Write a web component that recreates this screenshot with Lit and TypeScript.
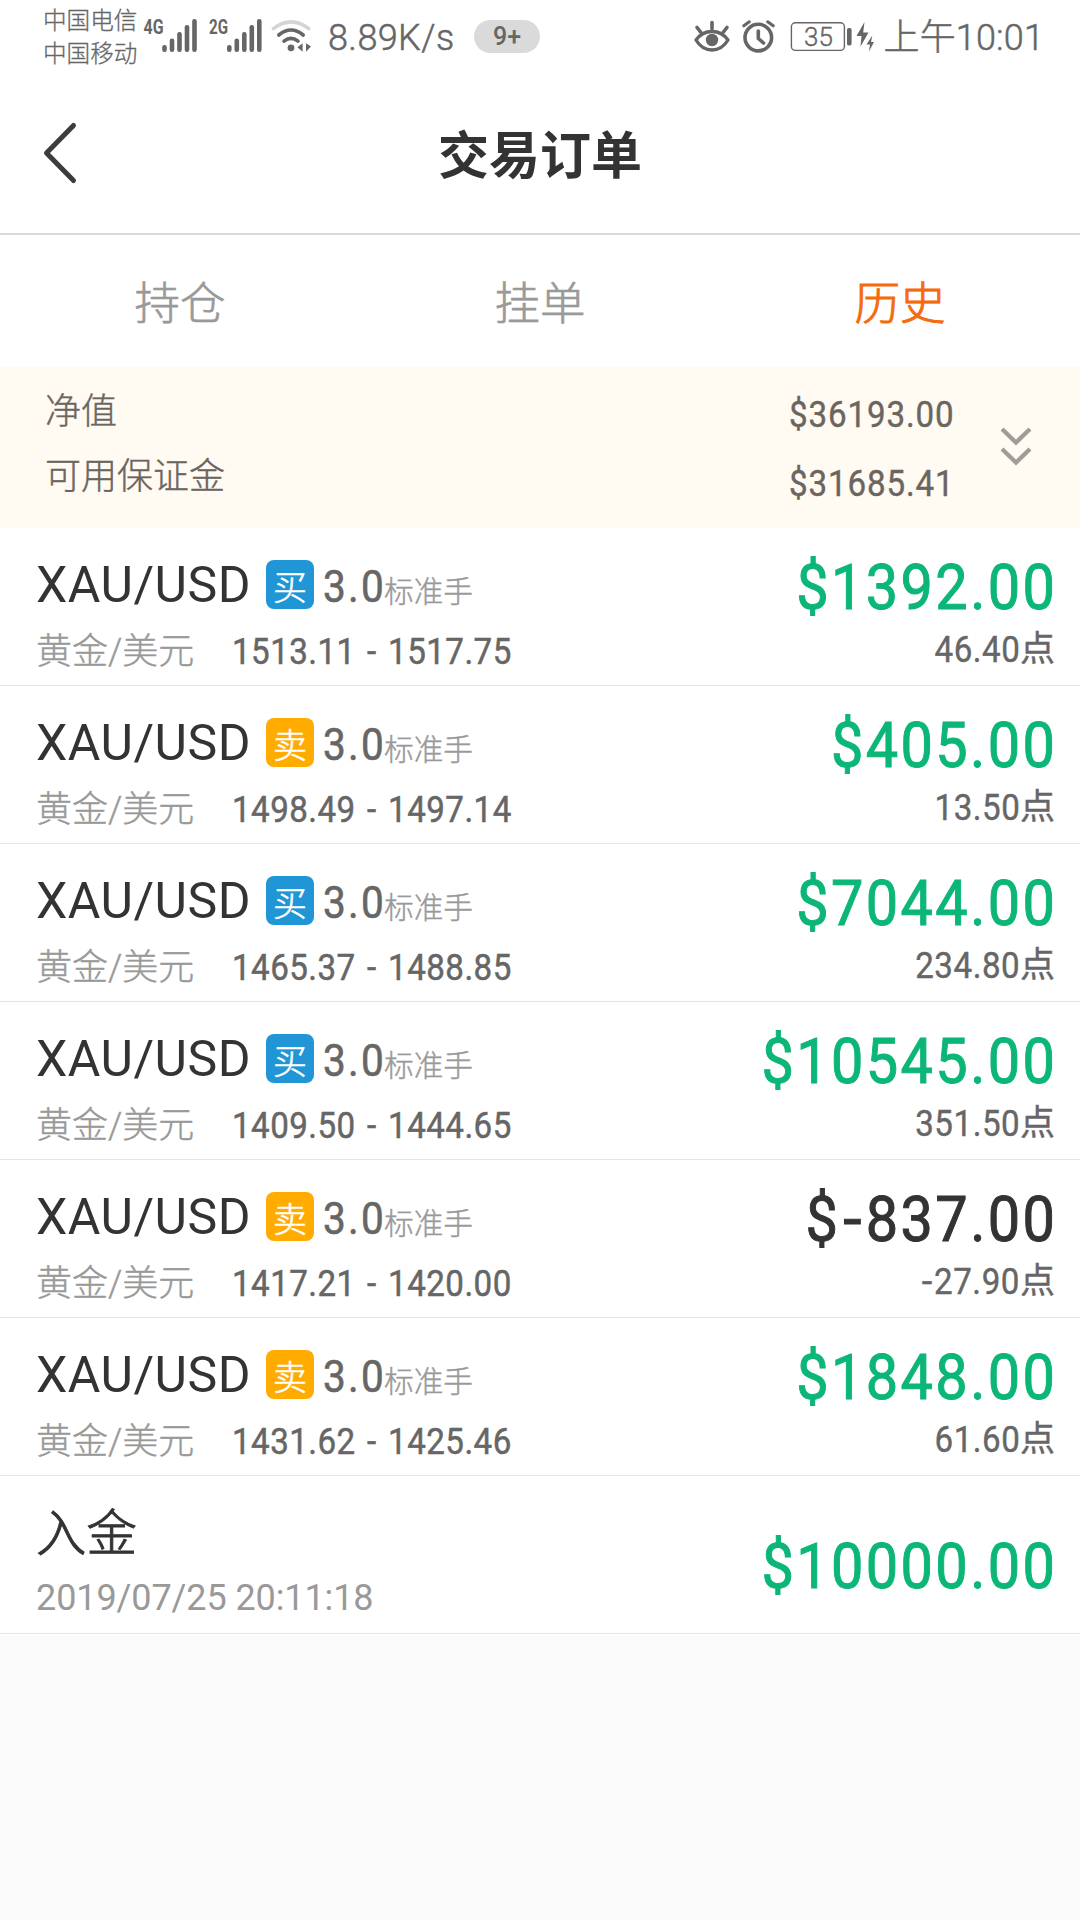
import { LitElement, html, css, svg } from "lit";
import { customElement, property } from "lit/decorators.js";
import { classMap } from "lit/directives/class-map.js";

interface Order {
  side: "buy" | "sell";
  range: string;
  amount: string;
  points: string;
}

const ORDERS: Order[] = [
  { side: "buy", range: "1513.11 - 1517.75", amount: "$1392.00", points: "46.40" },
  { side: "sell", range: "1498.49 - 1497.14", amount: "$405.00", points: "13.50" },
  { side: "buy", range: "1465.37 - 1488.85", amount: "$7044.00", points: "234.80" },
  { side: "buy", range: "1409.50 - 1444.65", amount: "$10545.00", points: "351.50" },
  { side: "sell", range: "1417.21 - 1420.00", amount: "$-837.00", points: "-27.90" },
  { side: "sell", range: "1431.62 - 1425.46", amount: "$1848.00", points: "61.60" },
];

const BARS = [
  [0, 45],
  [7.5, 38.5],
  [15, 32],
  [22.5, 25],
  [30, 19],
];

@customElement("status-bar")
export class StatusBar extends LitElement {
  static styles = css`
    :host {
      display: flex;
      height: 74px;
      box-sizing: border-box;
      padding: 0 36px 0 43px;
      color: #666;
      font-family: Roboto, "Noto Sans CJK SC", sans-serif;
      white-space: nowrap;
    }
    .carriers {
      padding-top: 5px;
      width: 100px;
      font-size: 23.6px;
      line-height: 33px;
      font-weight: 300;
      -webkit-text-stroke: 0.3px #666;
    }
    .signals {
      width: 183px;
      height: 74px;
      flex: none;
    }
    .speed {
      width: 148px;
      font-size: 36px;
      line-height: 77px;
      font-weight: 300;
      padding-left: 2px;
      letter-spacing: 0.4px;
      box-sizing: border-box;
      -webkit-text-stroke: 0.5px #666;
    }
    .count {
      width: 66px;
      height: 33px;
      margin-top: 20px;
      border-radius: 17px;
      background: #dadada;
      text-align: center;
      font-size: 25px;
      line-height: 33px;
      font-weight: 500;
    }
    .icons {
      margin-left: auto;
      width: 192px;
      height: 74px;
      flex: none;
    }
    .time {
      font-size: 36px;
      line-height: 77px;
      font-weight: 300;
      letter-spacing: 0.15px;
      -webkit-text-stroke: 0.5px #666;
    }
    .net {
      font: 700 21px Roboto, sans-serif;
    }
    .level {
      font: 300 26px Roboto, sans-serif;
      stroke: #666;
      stroke-width: 0.4px;
    }
  `;

  private bars(x: number) {
    return BARS.map(
      ([dx, top]) => svg`<rect x=${x + dx} y=${top} width="4.6" height=${52 - top} rx="2.2"></rect>`,
    );
  }

  render() {
    return html`
      <div class="carriers">
        <div>中国电信</div>
        <div>中国移动</div>
      </div>
      <svg class="signals" viewBox="143 0 183 74" fill="#666">
        <text class="net" x="143.5" y="34" textLength="20" lengthAdjust="spacingAndGlyphs">4G</text>
        ${this.bars(162.2)}
        <text class="net" x="209" y="34" textLength="19" lengthAdjust="spacingAndGlyphs">2G</text>
        ${this.bars(227)}
        <circle cx="291" cy="47.8" r="3.4"></circle>
        <g fill="none" stroke="#666" stroke-width="3.6" stroke-linecap="round">
          <path d="M284 41.2Q291 35.4 298 41.2"></path>
          <path d="M278.8 35Q291 25 303.2 35"></path>
          <path d="M273.4 28.6Q291 15 308.8 28.6" stroke="#d4d4d4"></path>
        </g>
        <path d="M302.6 43.2V51.8L297.4 47.3ZM306 43.2V51.8L311 46.6Z"></path>
      </svg>
      <div class="speed">8.89K/s</div>
      <div class="count">9+</div>
      <svg class="icons" viewBox="692 0 192 74" fill="none" stroke="#666" stroke-linecap="round">
        <path d="M696 40Q702 31.5 712 31.5T728 40Q722 50 712 50T696 40Z" stroke-width="3.4" stroke-linejoin="round"></path>
        <circle cx="712" cy="40" r="6.2" fill="#666" stroke="none"></circle>
        <path d="M712 22.5V29M697 27.5L701 32.5M727 27.5L723 32.5" stroke-width="3.6"></path>
        <circle cx="758.3" cy="37.6" r="13.3" stroke-width="3.6"></circle>
        <path d="M758.3 31V38.5L763.5 43" stroke-width="3.6" stroke-linejoin="round"></path>
        <path d="M743.8 25.8L749.3 21.8M773.2 25.8L767.7 21.8" stroke-width="3"></path>
        <rect x="791.4" y="22.8" width="53" height="27.6" rx="4" stroke-width="1.4"></rect>
        <rect x="847" y="28" width="4.6" height="17.5" rx="1.8" fill="#666" stroke="none"></rect>
        <text class="level" x="818.4" y="45.8" text-anchor="middle" fill="#666">35</text>
        <path d="M864.5 22L856.5 36H861.5L860.5 46.5L868.5 32.5H863.2ZM872.3 35.5L866.5 44.5H870L869 51.5L874 42H871Z" fill="#666" stroke="none"></path>
      </svg>
      <div class="time">上午10:01</div>
    `;
  }
}

@customElement("order-row")
export class OrderRow extends LitElement {
  @property({ attribute: false }) order!: Order;

  static styles = css`
    :host {
      display: flex;
      justify-content: space-between;
      height: 158px;
      box-sizing: border-box;
      border-bottom: 1px solid #e4e4e4;
      padding: 0 25px 0 36px;
      background: #fff;
      white-space: nowrap;
    }
    .left {
      display: flex;
      flex-direction: column;
      gap: 15px;
      padding-top: 27px;
    }
    .head {
      display: flex;
      align-items: baseline;
      height: 60px;
      line-height: 60px;
    }
    .symbol {
      width: 230px;
      font-size: 50px;
      letter-spacing: 0.5px;
      color: #333;
    }
    .badge {
      align-self: flex-start;
      width: 48px;
      height: 49px;
      margin-top: 5px;
      border-radius: 8px;
      background: #2196d6;
      color: #fff;
      font-size: 34px;
      font-weight: 300;
      line-height: 56px;
      text-align: center;
      -webkit-text-stroke: 0.6px #fff;
    }
    .badge.sell {
      background: #ffab00;
    }
    .lots {
      margin-left: 9px;
      font-size: 45px;
      letter-spacing: 2.5px;
      transform: scaleX(0.9);
      transform-origin: left;
      color: #666;
      -webkit-text-stroke: 0.6px #666;
    }
    .unit {
      font-size: 29.7px;
      color: #999;
      font-weight: 300;
      margin-left: -9px;
      -webkit-text-stroke: 0.4px #999;
    }
    .sub {
      display: flex;
      height: 44px;
      font-size: 36px;
      line-height: 44px;
    }
    .name {
      width: 196px;
      font-weight: 300;
      color: #999;
      -webkit-text-stroke: 0.4px #999;
    }
    .range {
      color: #666;
      letter-spacing: 0.5px;
      word-spacing: 3px;
      transform: scaleX(0.92);
      transform-origin: left;
      -webkit-text-stroke: 0.5px #666;
    }
    .right {
      display: flex;
      flex-direction: column;
      align-items: flex-end;
      gap: 5px;
      padding-top: 25px;
    }
    .amount {
      margin-right: -2.4px;
      font-size: 63px;
      line-height: 70px;
      letter-spacing: 2.6px;
      transform: scaleX(0.915);
      transform-origin: right;
      color: #0bb677;
      -webkit-text-stroke: 1px currentColor;
    }
    .amount.loss {
      color: #333;
    }
    .minus {
      display: inline-block;
      transform: scaleX(1.15);
      margin: 0 3px 0 5px;
    }
    .points {
      display: flex;
      font-size: 36px;
      line-height: 44px;
      color: #666;
      -webkit-text-stroke: 0.4px #666;
    }
    .count {
      letter-spacing: 0.6px;
      transform: scaleX(0.92);
      transform-origin: right;
    }
    .points .minus {
      margin: 0 2px;
    }
    .pip {
      font-size: 35px;
    }
  `;

  private signed(text: string) {
    return text.split(/(-)/).map((part) => (part === "-" ? html`<span class="minus">-</span>` : part));
  }

  render() {
    const { side, range, amount, points } = this.order;
    return html`
      <div class="left">
        <div class="head">
          <span class="symbol">XAU/USD</span>
          <span class=${classMap({ badge: true, sell: side === "sell" })}>${side === "buy" ? "买" : "卖"}</span>
          <span class="lots">3.0</span>
          <span class="unit">标准手</span>
        </div>
        <div class="sub">
          <span class="name">黄金/美元</span>
          <span class="range">${range}</span>
        </div>
      </div>
      <div class="right">
        <span class=${classMap({ amount: true, loss: amount.includes("-") })}>${this.signed(amount)}</span>
        <span class="points"><span class="count">${this.signed(points)}</span><span class="pip">点</span></span>
      </div>
    `;
  }
}

@customElement("app-root")
export class AppRoot extends LitElement {
  static styles = css`
    :host {
      display: flex;
      flex-direction: column;
      width: 1080px;
      height: 1920px;
      overflow: hidden;
      background: #fff;
      font-family: Roboto, "Noto Sans CJK SC", sans-serif;
      white-space: nowrap;
    }
    .header {
      display: grid;
      grid-template-columns: 120px 1fr 120px;
      height: 161px;
      box-sizing: border-box;
      border-bottom: 2px solid #dadada;
    }
    .back {
      width: 36px;
      height: 64px;
      margin: 47px 0 0 42px;
    }
    .title {
      margin: 0;
      text-align: center;
      font-size: 51px;
      line-height: 165px;
      font-weight: 700;
      color: #333;
    }
    .tabs {
      display: grid;
      grid-template-columns: repeat(3, 1fr);
      height: 132px;
      text-align: center;
      font-size: 45.5px;
      line-height: 140px;
      font-weight: 300;
      color: #999;
      -webkit-text-stroke: 0.6px currentColor;
    }
    .tab.active {
      color: #f56a0a;
      -webkit-text-stroke: 0.9px currentColor;
    }
    .summary {
      display: flex;
      height: 161px;
      box-sizing: border-box;
      padding: 0 47px 0 45px;
      background: #fffaf2;
      color: #6b6560;
      font-size: 36px;
    }
    .labels {
      flex: 1;
      padding-top: 13px;
      line-height: 65px;
      font-weight: 300;
      -webkit-text-stroke: 0.4px #6b6560;
    }
    .values {
      width: 210px;
      padding-top: 14px;
      line-height: 69px;
      letter-spacing: 0.95px;
      transform: scaleX(0.92);
      transform-origin: left;
      -webkit-text-stroke: 0.4px #6b6560;
    }
    .expand {
      width: 34px;
      height: 42px;
      margin-top: 58px;
    }
    .deposit {
      display: flex;
      justify-content: space-between;
      height: 158px;
      box-sizing: border-box;
      padding: 0 25px 0 36px;
      border-bottom: 1px solid #e4e4e4;
    }
    .info {
      padding-top: 28px;
    }
    .kind {
      font-size: 50.5px;
      font-weight: 300;
      line-height: 60px;
      color: #333;
      -webkit-text-stroke: 0.9px #333;
    }
    .date {
      margin-top: 12px;
      font-size: 36px;
      line-height: 44px;
      color: #999;
      letter-spacing: -0.1px;
    }
    .credit {
      padding-top: 56px;
      margin-right: -2.4px;
      font-size: 63px;
      line-height: 70px;
      letter-spacing: 2.6px;
      transform: scaleX(0.915);
      transform-origin: right;
      color: #0bb677;
      -webkit-text-stroke: 1px currentColor;
    }
    .rest {
      flex: 1;
      margin-top: 2px;
      background: #fafafa;
    }
  `;

  render() {
    return html`
      <status-bar></status-bar>
      <header class="header">
        <svg class="back" viewBox="0 0 36 64" fill="none" stroke="#3c3c3c" stroke-width="5" stroke-linecap="round" stroke-linejoin="round">
          <path d="M31.5 4.5L4.5 32L31.5 59.5"></path>
        </svg>
        <h1 class="title">交易订单</h1>
      </header>
      <nav class="tabs">
        <span class="tab">持仓</span>
        <span class="tab">挂单</span>
        <span class="tab active">历史</span>
      </nav>
      <section class="summary">
        <div class="labels">
          <div>净值</div>
          <div>可用保证金</div>
        </div>
        <div class="values">
          <div>$36193.00</div>
          <div>$31685.41</div>
        </div>
        <svg class="expand" viewBox="0 0 34 42" fill="none" stroke="#a09c98" stroke-width="4.2">
          <path d="M3 4L17 17.5L31 4M3 24L17 37.5L31 24"></path>
        </svg>
      </section>
      ${ORDERS.map((order) => html`<order-row .order=${order}></order-row>`)}
      <section class="deposit">
        <div class="info">
          <div class="kind">入金</div>
          <div class="date">2019/07/25 20:11:18</div>
        </div>
        <div class="credit">$10000.00</div>
      </section>
      <div class="rest"></div>
    `;
  }
}
